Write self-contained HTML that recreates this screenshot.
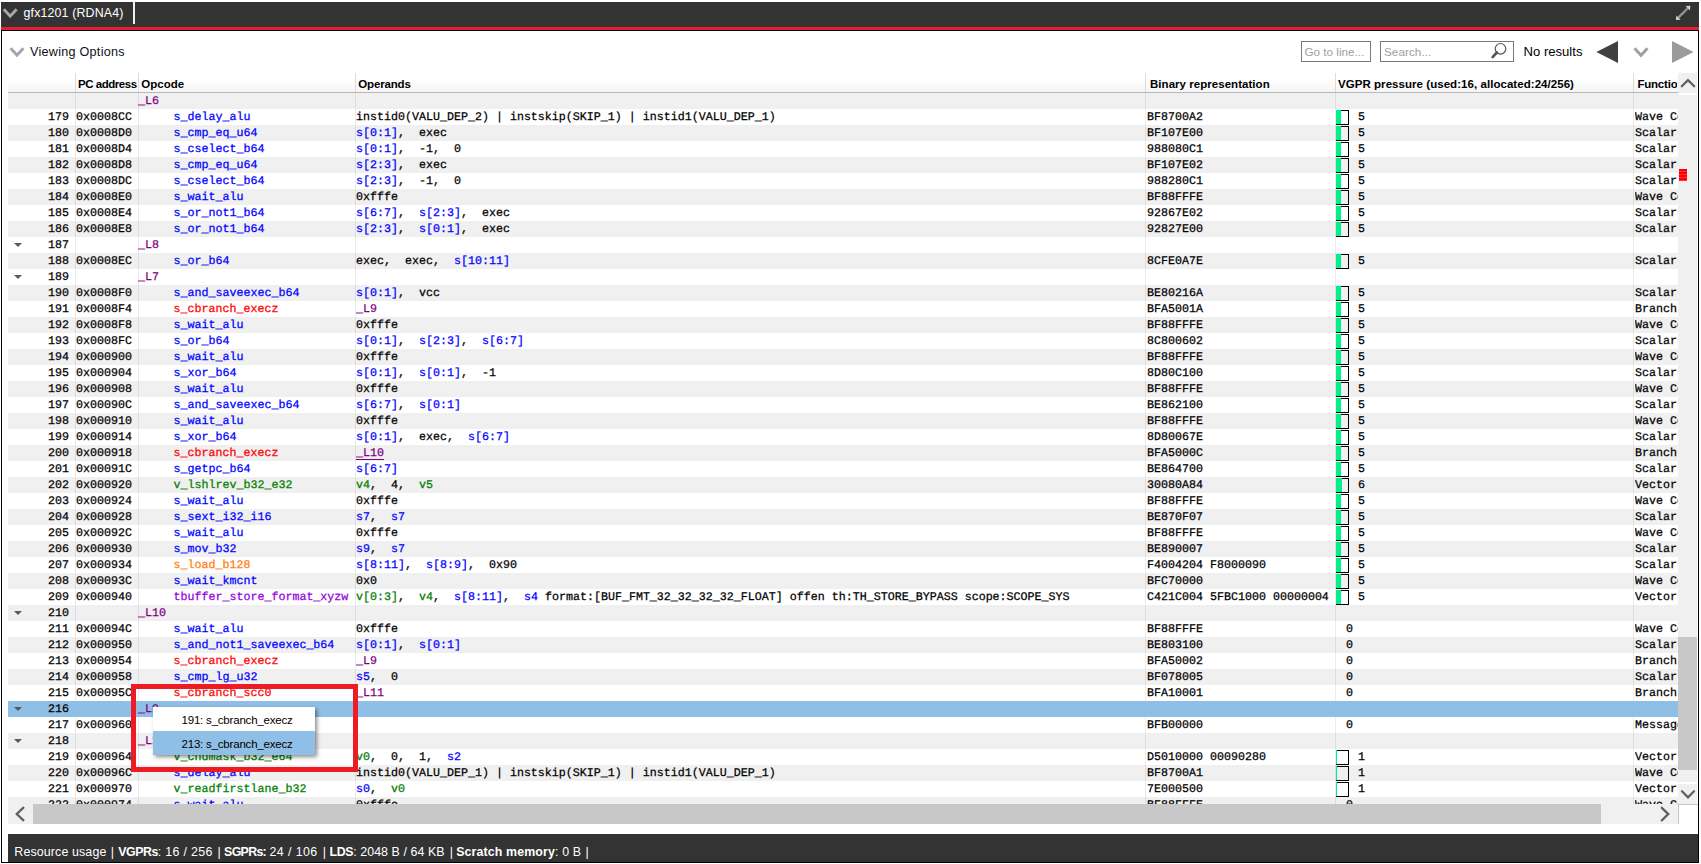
<!DOCTYPE html>
<html><head><meta charset="utf-8"><title>gfx1201</title>
<style>
html,body{margin:0;padding:0;}
body{width:1701px;height:864px;position:relative;overflow:hidden;background:#fff;font-family:"Liberation Sans",sans-serif;}
div,span,i,b,svg{position:absolute;}
#frame{left:1px;top:30px;width:1698px;height:833px;border:1px solid #000;box-sizing:border-box;}
#topbar{left:1px;top:2px;width:1698px;height:25px;background:#333333;}
#redline{left:1px;top:27px;width:1698px;height:3px;background:#e51e36;}
#tabtxt{left:23.5px;top:5px;font-size:12.4px;letter-spacing:0.15px;line-height:16px;color:#fff;white-space:pre;}
#tabsep{left:133px;top:2px;width:2px;height:22px;background:#f0f0f0;}
#vo{left:30px;top:44px;font-size:12.6px;letter-spacing:0.27px;line-height:16px;color:#101020;white-space:pre;}
#hdr{left:8px;top:73px;width:1670px;height:19px;background:linear-gradient(#ffffff,#ffffff 30%,#f5f5f5);}
#hdrline{left:8px;top:92px;width:1670px;height:1px;background:#b9b9b9;}
.h{top:77px;font-size:11.5px;line-height:14px;font-weight:bold;color:#000;white-space:pre;}
.hs{top:73px;width:1px;height:19px;background:#dcdcdc;}
#tb{z-index:0;left:8px;top:93px;width:1670px;height:711px;overflow:hidden;font-family:"Liberation Mono",monospace;font-size:11.67px;letter-spacing:0px;text-rendering:geometricPrecision;color:#000;-webkit-text-stroke:0.25px;}
.r{left:0;width:1670px;height:16px;}
.c{top:0px;height:16px;line-height:16px;white-space:pre;overflow:hidden;-webkit-text-stroke-color:currentColor;}
.c span{position:static;}
.vl{top:0;width:1px;height:711px;background:rgba(0,0,0,0.08);}
.ar{left:6px;top:6px;width:0;height:0;border-left:4px solid transparent;border-right:4px solid transparent;border-top:4.5px solid #5a5a5a;}
.bx{left:1328px;top:1px;width:13px;height:15px;box-sizing:border-box;border:1px solid #000;border-left:none;}
.bx b{left:0;top:-1px;height:14px;background:#00f08c;display:block;}
#status{left:8px;top:834px;width:1690px;height:28px;background:#333333;}
.st{top:844px;font-size:12.6px;line-height:16px;color:#fff;white-space:pre;}
.inp{top:41px;height:21px;box-sizing:border-box;border:1px solid #7a7a7a;background:#fff;}
.ph{top:44px;font-size:11.7px;line-height:16px;color:#a0a0a0;white-space:pre;}
#nores{left:1523.5px;top:44px;font-size:13.1px;line-height:16px;color:#000;white-space:pre;}
#vsb{left:1678px;top:73px;width:19px;height:731px;background:#f0f0f0;}
#vth{left:1678px;top:637px;width:19px;height:133px;background:#c8c8c8;}
#hsb{left:8px;top:804px;width:1670px;height:20px;background:#f0f0f0;}
#hth{left:33px;top:804px;width:1568px;height:20px;background:#c8c8c8;}
#redmark{left:1679px;top:169px;width:8px;height:12px;background:repeating-linear-gradient(#ff0000 0,#ff0000 2px,#ff3030 2px,#ff3030 3px);}
#redbox{left:131px;top:684px;width:227px;height:88px;box-sizing:border-box;border:5px solid #ec1c24;}
#menu{left:153px;top:707px;width:162px;height:48px;background:#fff;box-shadow:2px 2px 4px rgba(0,0,0,0.45);}
#mi2{left:0;top:24px;width:162px;height:24px;background:#8fbfe6;}
.mt{left:28.5px;font-size:11.5px;letter-spacing:-0.2px;line-height:16px;color:#000;white-space:pre;}
</style></head><body>
<div id="topbar"></div><div id="redline"></div><div id="frame"></div>
<svg style="left:0;top:0" width="140" height="70"><path d="M3.8 9.3 L10.2 16.2 L16.6 9.3" fill="none" stroke="#a8a8a8" stroke-width="2.9"/><path d="M10.6 48.2 L17 55.2 L23.4 48.2" fill="none" stroke="#a3a3a8" stroke-width="2.9"/></svg>
<div id="tabtxt">gfx1201 (RDNA4)</div><div id="tabsep"></div>
<svg style="left:1672px;top:2px" width="24" height="24"><g fill="#d0d0d0" stroke="none"><path d="M18.3 3.7 L13.6 4.1 L17.9 8.4 Z"/><path d="M3.9 18.1 L8.6 17.7 L4.3 13.4 Z"/></g><path d="M6.6 15.4 L15.6 6.4" stroke="#d0d0d0" stroke-width="2.3" stroke-dasharray="0.85 0.5" fill="none"/></svg>
<div id="vo">Viewing Options</div>
<div class="inp" style="left:1301px;width:70px"></div><div class="ph" style="left:1304.5px">Go to line...</div>
<div class="inp" style="left:1380px;width:134px"></div><div class="ph" style="left:1384px;font-size:11.8px">Search...</div>
<svg style="left:1488px;top:41px" width="24" height="21"><circle cx="12.5" cy="7.8" r="5.3" fill="none" stroke="#555" stroke-width="1.2"/><path d="M8.9 11.5 L4.6 16.1" stroke="#555" stroke-width="2.6" stroke-linecap="round"/></svg>
<div id="nores">No results</div>
<svg style="left:1590px;top:38px" width="108" height="28"><path d="M6.4 14 L28 3 L28 25 Z" fill="#404040"/><path d="M44.5 10.3 L51 17.3 L57.5 10.3" fill="none" stroke="#a0a0a0" stroke-width="2.9"/><path d="M103.6 14 L82 3 L82 25 Z" fill="#9b9b9b"/></svg>
<div id="hdr"></div><div id="hdrline"></div>
<div class="hs" style="left:75px"></div><div class="hs" style="left:138px"></div><div class="hs" style="left:355px"></div><div class="hs" style="left:1145px"></div><div class="hs" style="left:1335px"></div><div class="hs" style="left:1633px"></div>
<div class="h" style="left:78px;letter-spacing:-0.46px">PC address</div>
<div class="h" style="left:141.3px">Opcode</div>
<div class="h" style="left:358.3px;letter-spacing:-0.16px">Operands</div>
<div class="h" style="left:1150px;letter-spacing:0.04px">Binary representation</div>
<div class="h" style="left:1338px;letter-spacing:0.05px">VGPR pressure (used:16, allocated:24/256)</div>
<div class="h" style="left:1637.4px;letter-spacing:-0.2px;width:40px;overflow:hidden">Functio</div>
<div id="tb">
<div class="r" style="top:0px;background:#f0f0f0"><div class="c" style="left:130px;width:215px;"><span style="color:#800080">_L6</span></div></div>
<div class="r" style="top:16px;background:#ffffff"><div class="c" style="left:0px;width:61px;text-align:right">179</div><div class="c" style="left:68px;width:62px;">0x0008CC</div><div class="c" style="left:130.5px;width:215px;"><span style="color:#0000ff">     s_delay_alu</span></div><div class="c" style="left:348px;width:790px;">instid0(VALU_DEP_2) | instskip(SKIP_1) | instid1(VALU_DEP_1)</div><div class="c" style="left:1139px;width:189px;">BF8700A2</div><i class="bx"><b style="width:5px"></b></i><div class="c" style="left:1350px;width:100px;">5</div><div class="c" style="left:1627px;width:43px;">Wave Control</div></div>
<div class="r" style="top:32px;background:#f0f0f0"><div class="c" style="left:0px;width:61px;text-align:right">180</div><div class="c" style="left:68px;width:62px;">0x0008D0</div><div class="c" style="left:130.5px;width:215px;"><span style="color:#0000ff">     s_cmp_eq_u64</span></div><div class="c" style="left:348px;width:790px;"><span style="color:#0000ff">s[0:1]</span>,  exec</div><div class="c" style="left:1139px;width:189px;">BF107E00</div><i class="bx"><b style="width:5px"></b></i><div class="c" style="left:1350px;width:100px;">5</div><div class="c" style="left:1627px;width:43px;">Scalar ALU</div></div>
<div class="r" style="top:48px;background:#ffffff"><div class="c" style="left:0px;width:61px;text-align:right">181</div><div class="c" style="left:68px;width:62px;">0x0008D4</div><div class="c" style="left:130.5px;width:215px;"><span style="color:#0000ff">     s_cselect_b64</span></div><div class="c" style="left:348px;width:790px;"><span style="color:#0000ff">s[0:1]</span>,  -1,  0</div><div class="c" style="left:1139px;width:189px;">988080C1</div><i class="bx"><b style="width:5px"></b></i><div class="c" style="left:1350px;width:100px;">5</div><div class="c" style="left:1627px;width:43px;">Scalar ALU</div></div>
<div class="r" style="top:64px;background:#f0f0f0"><div class="c" style="left:0px;width:61px;text-align:right">182</div><div class="c" style="left:68px;width:62px;">0x0008D8</div><div class="c" style="left:130.5px;width:215px;"><span style="color:#0000ff">     s_cmp_eq_u64</span></div><div class="c" style="left:348px;width:790px;"><span style="color:#0000ff">s[2:3]</span>,  exec</div><div class="c" style="left:1139px;width:189px;">BF107E02</div><i class="bx"><b style="width:5px"></b></i><div class="c" style="left:1350px;width:100px;">5</div><div class="c" style="left:1627px;width:43px;">Scalar ALU</div></div>
<div class="r" style="top:80px;background:#ffffff"><div class="c" style="left:0px;width:61px;text-align:right">183</div><div class="c" style="left:68px;width:62px;">0x0008DC</div><div class="c" style="left:130.5px;width:215px;"><span style="color:#0000ff">     s_cselect_b64</span></div><div class="c" style="left:348px;width:790px;"><span style="color:#0000ff">s[2:3]</span>,  -1,  0</div><div class="c" style="left:1139px;width:189px;">988280C1</div><i class="bx"><b style="width:5px"></b></i><div class="c" style="left:1350px;width:100px;">5</div><div class="c" style="left:1627px;width:43px;">Scalar ALU</div></div>
<div class="r" style="top:96px;background:#f0f0f0"><div class="c" style="left:0px;width:61px;text-align:right">184</div><div class="c" style="left:68px;width:62px;">0x0008E0</div><div class="c" style="left:130.5px;width:215px;"><span style="color:#0000ff">     s_wait_alu</span></div><div class="c" style="left:348px;width:790px;">0xfffe</div><div class="c" style="left:1139px;width:189px;">BF88FFFE</div><i class="bx"><b style="width:5px"></b></i><div class="c" style="left:1350px;width:100px;">5</div><div class="c" style="left:1627px;width:43px;">Wave Control</div></div>
<div class="r" style="top:112px;background:#ffffff"><div class="c" style="left:0px;width:61px;text-align:right">185</div><div class="c" style="left:68px;width:62px;">0x0008E4</div><div class="c" style="left:130.5px;width:215px;"><span style="color:#0000ff">     s_or_not1_b64</span></div><div class="c" style="left:348px;width:790px;"><span style="color:#0000ff">s[6:7]</span>,  <span style="color:#0000ff">s[2:3]</span>,  exec</div><div class="c" style="left:1139px;width:189px;">92867E02</div><i class="bx"><b style="width:5px"></b></i><div class="c" style="left:1350px;width:100px;">5</div><div class="c" style="left:1627px;width:43px;">Scalar ALU</div></div>
<div class="r" style="top:128px;background:#f0f0f0"><div class="c" style="left:0px;width:61px;text-align:right">186</div><div class="c" style="left:68px;width:62px;">0x0008E8</div><div class="c" style="left:130.5px;width:215px;"><span style="color:#0000ff">     s_or_not1_b64</span></div><div class="c" style="left:348px;width:790px;"><span style="color:#0000ff">s[2:3]</span>,  <span style="color:#0000ff">s[0:1]</span>,  exec</div><div class="c" style="left:1139px;width:189px;">92827E00</div><i class="bx"><b style="width:5px"></b></i><div class="c" style="left:1350px;width:100px;">5</div><div class="c" style="left:1627px;width:43px;">Scalar ALU</div></div>
<div class="r" style="top:144px;background:#ffffff"><i class="ar"></i><div class="c" style="left:0px;width:61px;text-align:right">187</div><div class="c" style="left:130px;width:215px;"><span style="color:#800080">_L8</span></div></div>
<div class="r" style="top:160px;background:#f0f0f0"><div class="c" style="left:0px;width:61px;text-align:right">188</div><div class="c" style="left:68px;width:62px;">0x0008EC</div><div class="c" style="left:130.5px;width:215px;"><span style="color:#0000ff">     s_or_b64</span></div><div class="c" style="left:348px;width:790px;">exec,  exec,  <span style="color:#0000ff">s[10:11]</span></div><div class="c" style="left:1139px;width:189px;">8CFE0A7E</div><i class="bx"><b style="width:5px"></b></i><div class="c" style="left:1350px;width:100px;">5</div><div class="c" style="left:1627px;width:43px;">Scalar ALU</div></div>
<div class="r" style="top:176px;background:#ffffff"><i class="ar"></i><div class="c" style="left:0px;width:61px;text-align:right">189</div><div class="c" style="left:130px;width:215px;"><span style="color:#800080">_L7</span></div></div>
<div class="r" style="top:192px;background:#f0f0f0"><div class="c" style="left:0px;width:61px;text-align:right">190</div><div class="c" style="left:68px;width:62px;">0x0008F0</div><div class="c" style="left:130.5px;width:215px;"><span style="color:#0000ff">     s_and_saveexec_b64</span></div><div class="c" style="left:348px;width:790px;"><span style="color:#0000ff">s[0:1]</span>,  vcc</div><div class="c" style="left:1139px;width:189px;">BE80216A</div><i class="bx"><b style="width:5px"></b></i><div class="c" style="left:1350px;width:100px;">5</div><div class="c" style="left:1627px;width:43px;">Scalar ALU</div></div>
<div class="r" style="top:208px;background:#ffffff"><div class="c" style="left:0px;width:61px;text-align:right">191</div><div class="c" style="left:68px;width:62px;">0x0008F4</div><div class="c" style="left:130.5px;width:215px;"><span style="color:#ff0000">     s_cbranch_execz</span></div><div class="c" style="left:348px;width:790px;"><span style="color:#800080">_L9</span></div><div class="c" style="left:1139px;width:189px;">BFA5001A</div><i class="bx"><b style="width:5px"></b></i><div class="c" style="left:1350px;width:100px;">5</div><div class="c" style="left:1627px;width:43px;">Branch</div></div>
<div class="r" style="top:224px;background:#f0f0f0"><div class="c" style="left:0px;width:61px;text-align:right">192</div><div class="c" style="left:68px;width:62px;">0x0008F8</div><div class="c" style="left:130.5px;width:215px;"><span style="color:#0000ff">     s_wait_alu</span></div><div class="c" style="left:348px;width:790px;">0xfffe</div><div class="c" style="left:1139px;width:189px;">BF88FFFE</div><i class="bx"><b style="width:5px"></b></i><div class="c" style="left:1350px;width:100px;">5</div><div class="c" style="left:1627px;width:43px;">Wave Control</div></div>
<div class="r" style="top:240px;background:#ffffff"><div class="c" style="left:0px;width:61px;text-align:right">193</div><div class="c" style="left:68px;width:62px;">0x0008FC</div><div class="c" style="left:130.5px;width:215px;"><span style="color:#0000ff">     s_or_b64</span></div><div class="c" style="left:348px;width:790px;"><span style="color:#0000ff">s[0:1]</span>,  <span style="color:#0000ff">s[2:3]</span>,  <span style="color:#0000ff">s[6:7]</span></div><div class="c" style="left:1139px;width:189px;">8C800602</div><i class="bx"><b style="width:5px"></b></i><div class="c" style="left:1350px;width:100px;">5</div><div class="c" style="left:1627px;width:43px;">Scalar ALU</div></div>
<div class="r" style="top:256px;background:#f0f0f0"><div class="c" style="left:0px;width:61px;text-align:right">194</div><div class="c" style="left:68px;width:62px;">0x000900</div><div class="c" style="left:130.5px;width:215px;"><span style="color:#0000ff">     s_wait_alu</span></div><div class="c" style="left:348px;width:790px;">0xfffe</div><div class="c" style="left:1139px;width:189px;">BF88FFFE</div><i class="bx"><b style="width:5px"></b></i><div class="c" style="left:1350px;width:100px;">5</div><div class="c" style="left:1627px;width:43px;">Wave Control</div></div>
<div class="r" style="top:272px;background:#ffffff"><div class="c" style="left:0px;width:61px;text-align:right">195</div><div class="c" style="left:68px;width:62px;">0x000904</div><div class="c" style="left:130.5px;width:215px;"><span style="color:#0000ff">     s_xor_b64</span></div><div class="c" style="left:348px;width:790px;"><span style="color:#0000ff">s[0:1]</span>,  <span style="color:#0000ff">s[0:1]</span>,  -1</div><div class="c" style="left:1139px;width:189px;">8D80C100</div><i class="bx"><b style="width:5px"></b></i><div class="c" style="left:1350px;width:100px;">5</div><div class="c" style="left:1627px;width:43px;">Scalar ALU</div></div>
<div class="r" style="top:288px;background:#f0f0f0"><div class="c" style="left:0px;width:61px;text-align:right">196</div><div class="c" style="left:68px;width:62px;">0x000908</div><div class="c" style="left:130.5px;width:215px;"><span style="color:#0000ff">     s_wait_alu</span></div><div class="c" style="left:348px;width:790px;">0xfffe</div><div class="c" style="left:1139px;width:189px;">BF88FFFE</div><i class="bx"><b style="width:5px"></b></i><div class="c" style="left:1350px;width:100px;">5</div><div class="c" style="left:1627px;width:43px;">Wave Control</div></div>
<div class="r" style="top:304px;background:#ffffff"><div class="c" style="left:0px;width:61px;text-align:right">197</div><div class="c" style="left:68px;width:62px;">0x00090C</div><div class="c" style="left:130.5px;width:215px;"><span style="color:#0000ff">     s_and_saveexec_b64</span></div><div class="c" style="left:348px;width:790px;"><span style="color:#0000ff">s[6:7]</span>,  <span style="color:#0000ff">s[0:1]</span></div><div class="c" style="left:1139px;width:189px;">BE862100</div><i class="bx"><b style="width:5px"></b></i><div class="c" style="left:1350px;width:100px;">5</div><div class="c" style="left:1627px;width:43px;">Scalar ALU</div></div>
<div class="r" style="top:320px;background:#f0f0f0"><div class="c" style="left:0px;width:61px;text-align:right">198</div><div class="c" style="left:68px;width:62px;">0x000910</div><div class="c" style="left:130.5px;width:215px;"><span style="color:#0000ff">     s_wait_alu</span></div><div class="c" style="left:348px;width:790px;">0xfffe</div><div class="c" style="left:1139px;width:189px;">BF88FFFE</div><i class="bx"><b style="width:5px"></b></i><div class="c" style="left:1350px;width:100px;">5</div><div class="c" style="left:1627px;width:43px;">Wave Control</div></div>
<div class="r" style="top:336px;background:#ffffff"><div class="c" style="left:0px;width:61px;text-align:right">199</div><div class="c" style="left:68px;width:62px;">0x000914</div><div class="c" style="left:130.5px;width:215px;"><span style="color:#0000ff">     s_xor_b64</span></div><div class="c" style="left:348px;width:790px;"><span style="color:#0000ff">s[0:1]</span>,  exec,  <span style="color:#0000ff">s[6:7]</span></div><div class="c" style="left:1139px;width:189px;">8D80067E</div><i class="bx"><b style="width:5px"></b></i><div class="c" style="left:1350px;width:100px;">5</div><div class="c" style="left:1627px;width:43px;">Scalar ALU</div></div>
<div class="r" style="top:352px;background:#f0f0f0"><div class="c" style="left:0px;width:61px;text-align:right">200</div><div class="c" style="left:68px;width:62px;">0x000918</div><div class="c" style="left:130.5px;width:215px;"><span style="color:#ff0000">     s_cbranch_execz</span></div><div class="c" style="left:348px;width:790px;"><span style="color:#800080;text-decoration:underline;text-underline-offset:2.5px;text-decoration-thickness:1px">_L10</span></div><div class="c" style="left:1139px;width:189px;">BFA5000C</div><i class="bx"><b style="width:5px"></b></i><div class="c" style="left:1350px;width:100px;">5</div><div class="c" style="left:1627px;width:43px;">Branch</div></div>
<div class="r" style="top:368px;background:#ffffff"><div class="c" style="left:0px;width:61px;text-align:right">201</div><div class="c" style="left:68px;width:62px;">0x00091C</div><div class="c" style="left:130.5px;width:215px;"><span style="color:#0000ff">     s_getpc_b64</span></div><div class="c" style="left:348px;width:790px;"><span style="color:#0000ff">s[6:7]</span></div><div class="c" style="left:1139px;width:189px;">BE864700</div><i class="bx"><b style="width:5px"></b></i><div class="c" style="left:1350px;width:100px;">5</div><div class="c" style="left:1627px;width:43px;">Scalar ALU</div></div>
<div class="r" style="top:384px;background:#f0f0f0"><div class="c" style="left:0px;width:61px;text-align:right">202</div><div class="c" style="left:68px;width:62px;">0x000920</div><div class="c" style="left:130.5px;width:215px;"><span style="color:#008000">     v_lshlrev_b32_e32</span></div><div class="c" style="left:348px;width:790px;"><span style="color:#008000">v4</span>,  4,  <span style="color:#008000">v5</span></div><div class="c" style="left:1139px;width:189px;">30080A84</div><i class="bx"><b style="width:6px"></b></i><div class="c" style="left:1350px;width:100px;">6</div><div class="c" style="left:1627px;width:43px;">Vector ALU</div></div>
<div class="r" style="top:400px;background:#ffffff"><div class="c" style="left:0px;width:61px;text-align:right">203</div><div class="c" style="left:68px;width:62px;">0x000924</div><div class="c" style="left:130.5px;width:215px;"><span style="color:#0000ff">     s_wait_alu</span></div><div class="c" style="left:348px;width:790px;">0xfffe</div><div class="c" style="left:1139px;width:189px;">BF88FFFE</div><i class="bx"><b style="width:5px"></b></i><div class="c" style="left:1350px;width:100px;">5</div><div class="c" style="left:1627px;width:43px;">Wave Control</div></div>
<div class="r" style="top:416px;background:#f0f0f0"><div class="c" style="left:0px;width:61px;text-align:right">204</div><div class="c" style="left:68px;width:62px;">0x000928</div><div class="c" style="left:130.5px;width:215px;"><span style="color:#0000ff">     s_sext_i32_i16</span></div><div class="c" style="left:348px;width:790px;"><span style="color:#0000ff">s7</span>,  <span style="color:#0000ff">s7</span></div><div class="c" style="left:1139px;width:189px;">BE870F07</div><i class="bx"><b style="width:5px"></b></i><div class="c" style="left:1350px;width:100px;">5</div><div class="c" style="left:1627px;width:43px;">Scalar ALU</div></div>
<div class="r" style="top:432px;background:#ffffff"><div class="c" style="left:0px;width:61px;text-align:right">205</div><div class="c" style="left:68px;width:62px;">0x00092C</div><div class="c" style="left:130.5px;width:215px;"><span style="color:#0000ff">     s_wait_alu</span></div><div class="c" style="left:348px;width:790px;">0xfffe</div><div class="c" style="left:1139px;width:189px;">BF88FFFE</div><i class="bx"><b style="width:5px"></b></i><div class="c" style="left:1350px;width:100px;">5</div><div class="c" style="left:1627px;width:43px;">Wave Control</div></div>
<div class="r" style="top:448px;background:#f0f0f0"><div class="c" style="left:0px;width:61px;text-align:right">206</div><div class="c" style="left:68px;width:62px;">0x000930</div><div class="c" style="left:130.5px;width:215px;"><span style="color:#0000ff">     s_mov_b32</span></div><div class="c" style="left:348px;width:790px;"><span style="color:#0000ff">s9</span>,  <span style="color:#0000ff">s7</span></div><div class="c" style="left:1139px;width:189px;">BE890007</div><i class="bx"><b style="width:5px"></b></i><div class="c" style="left:1350px;width:100px;">5</div><div class="c" style="left:1627px;width:43px;">Scalar ALU</div></div>
<div class="r" style="top:464px;background:#ffffff"><div class="c" style="left:0px;width:61px;text-align:right">207</div><div class="c" style="left:68px;width:62px;">0x000934</div><div class="c" style="left:130.5px;width:215px;"><span style="color:#ff7f0e">     s_load_b128</span></div><div class="c" style="left:348px;width:790px;"><span style="color:#0000ff">s[8:11]</span>,  <span style="color:#0000ff">s[8:9]</span>,  0x90</div><div class="c" style="left:1139px;width:189px;">F4004204 F8000090</div><i class="bx"><b style="width:5px"></b></i><div class="c" style="left:1350px;width:100px;">5</div><div class="c" style="left:1627px;width:43px;">Scalar ALU</div></div>
<div class="r" style="top:480px;background:#f0f0f0"><div class="c" style="left:0px;width:61px;text-align:right">208</div><div class="c" style="left:68px;width:62px;">0x00093C</div><div class="c" style="left:130.5px;width:215px;"><span style="color:#0000ff">     s_wait_kmcnt</span></div><div class="c" style="left:348px;width:790px;">0x0</div><div class="c" style="left:1139px;width:189px;">BFC70000</div><i class="bx"><b style="width:5px"></b></i><div class="c" style="left:1350px;width:100px;">5</div><div class="c" style="left:1627px;width:43px;">Wave Control</div></div>
<div class="r" style="top:496px;background:#ffffff"><div class="c" style="left:0px;width:61px;text-align:right">209</div><div class="c" style="left:68px;width:62px;">0x000940</div><div class="c" style="left:130.5px;width:215px;"><span style="color:#9400e0">     tbuffer_store_format_xyzw</span></div><div class="c" style="left:348px;width:790px;"><span style="color:#008000">v[0:3]</span>,  <span style="color:#008000">v4</span>,  <span style="color:#0000ff">s[8:11]</span>,  <span style="color:#0000ff">s4</span> format:[BUF_FMT_32_32_32_32_FLOAT] offen th:TH_STORE_BYPASS scope:SCOPE_SYS</div><div class="c" style="left:1139px;width:189px;">C421C004 5FBC1000 00000004</div><i class="bx"><b style="width:5px"></b></i><div class="c" style="left:1350px;width:100px;">5</div><div class="c" style="left:1627px;width:43px;">Vector ALU</div></div>
<div class="r" style="top:512px;background:#f0f0f0"><i class="ar"></i><div class="c" style="left:0px;width:61px;text-align:right">210</div><div class="c" style="left:130px;width:215px;"><span style="color:#800080">_L10</span></div></div>
<div class="r" style="top:528px;background:#ffffff"><div class="c" style="left:0px;width:61px;text-align:right">211</div><div class="c" style="left:68px;width:62px;">0x00094C</div><div class="c" style="left:130.5px;width:215px;"><span style="color:#0000ff">     s_wait_alu</span></div><div class="c" style="left:348px;width:790px;">0xfffe</div><div class="c" style="left:1139px;width:189px;">BF88FFFE</div><div class="c" style="left:1338px;width:100px;">0</div><div class="c" style="left:1627px;width:43px;">Wave Control</div></div>
<div class="r" style="top:544px;background:#f0f0f0"><div class="c" style="left:0px;width:61px;text-align:right">212</div><div class="c" style="left:68px;width:62px;">0x000950</div><div class="c" style="left:130.5px;width:215px;"><span style="color:#0000ff">     s_and_not1_saveexec_b64</span></div><div class="c" style="left:348px;width:790px;"><span style="color:#0000ff">s[0:1]</span>,  <span style="color:#0000ff">s[0:1]</span></div><div class="c" style="left:1139px;width:189px;">BE803100</div><div class="c" style="left:1338px;width:100px;">0</div><div class="c" style="left:1627px;width:43px;">Scalar ALU</div></div>
<div class="r" style="top:560px;background:#ffffff"><div class="c" style="left:0px;width:61px;text-align:right">213</div><div class="c" style="left:68px;width:62px;">0x000954</div><div class="c" style="left:130.5px;width:215px;"><span style="color:#ff0000">     s_cbranch_execz</span></div><div class="c" style="left:348px;width:790px;"><span style="color:#800080">_L9</span></div><div class="c" style="left:1139px;width:189px;">BFA50002</div><div class="c" style="left:1338px;width:100px;">0</div><div class="c" style="left:1627px;width:43px;">Branch</div></div>
<div class="r" style="top:576px;background:#f0f0f0"><div class="c" style="left:0px;width:61px;text-align:right">214</div><div class="c" style="left:68px;width:62px;">0x000958</div><div class="c" style="left:130.5px;width:215px;"><span style="color:#0000ff">     s_cmp_lg_u32</span></div><div class="c" style="left:348px;width:790px;"><span style="color:#0000ff">s5</span>,  0</div><div class="c" style="left:1139px;width:189px;">BF078005</div><div class="c" style="left:1338px;width:100px;">0</div><div class="c" style="left:1627px;width:43px;">Scalar ALU</div></div>
<div class="r" style="top:592px;background:#ffffff"><div class="c" style="left:0px;width:61px;text-align:right">215</div><div class="c" style="left:68px;width:62px;">0x00095C</div><div class="c" style="left:130.5px;width:215px;"><span style="color:#ff0000">     s_cbranch_scc0</span></div><div class="c" style="left:348px;width:790px;"><span style="color:#800080">_L11</span></div><div class="c" style="left:1139px;width:189px;">BFA10001</div><div class="c" style="left:1338px;width:100px;">0</div><div class="c" style="left:1627px;width:43px;">Branch</div></div>
<div class="r" style="top:608px;background:#8fbfe6;z-index:2"><i class="ar"></i><div class="c" style="left:0px;width:61px;text-align:right">216</div><div class="c" style="left:130px;width:215px;"><span style="color:#800080">_L9</span></div></div>
<div class="r" style="top:624px;background:#ffffff"><div class="c" style="left:0px;width:61px;text-align:right">217</div><div class="c" style="left:68px;width:62px;">0x000960</div><div class="c" style="left:130.5px;width:215px;"><span style="color:#0000ff">     s_endpgm</span></div><div class="c" style="left:348px;width:790px;"></div><div class="c" style="left:1139px;width:189px;">BFB00000</div><div class="c" style="left:1338px;width:100px;">0</div><div class="c" style="left:1627px;width:43px;">Message</div></div>
<div class="r" style="top:640px;background:#f0f0f0"><i class="ar"></i><div class="c" style="left:0px;width:61px;text-align:right">218</div><div class="c" style="left:130px;width:215px;"><span style="color:#800080">_L11</span></div></div>
<div class="r" style="top:656px;background:#ffffff"><div class="c" style="left:0px;width:61px;text-align:right">219</div><div class="c" style="left:68px;width:62px;">0x000964</div><div class="c" style="left:130.5px;width:215px;"><span style="color:#008000">     v_cndmask_b32_e64</span></div><div class="c" style="left:348px;width:790px;"><span style="color:#008000">v0</span>,  0,  1,  <span style="color:#0000ff">s2</span></div><div class="c" style="left:1139px;width:189px;">D5010000 00090280</div><i class="bx"><b style="width:1px"></b></i><div class="c" style="left:1350px;width:100px;">1</div><div class="c" style="left:1627px;width:43px;">Vector ALU</div></div>
<div class="r" style="top:672px;background:#f0f0f0"><div class="c" style="left:0px;width:61px;text-align:right">220</div><div class="c" style="left:68px;width:62px;">0x00096C</div><div class="c" style="left:130.5px;width:215px;"><span style="color:#0000ff">     s_delay_alu</span></div><div class="c" style="left:348px;width:790px;">instid0(VALU_DEP_1) | instskip(SKIP_1) | instid1(VALU_DEP_1)</div><div class="c" style="left:1139px;width:189px;">BF8700A1</div><i class="bx"><b style="width:1px"></b></i><div class="c" style="left:1350px;width:100px;">1</div><div class="c" style="left:1627px;width:43px;">Wave Control</div></div>
<div class="r" style="top:688px;background:#ffffff"><div class="c" style="left:0px;width:61px;text-align:right">221</div><div class="c" style="left:68px;width:62px;">0x000970</div><div class="c" style="left:130.5px;width:215px;"><span style="color:#008000">     v_readfirstlane_b32</span></div><div class="c" style="left:348px;width:790px;"><span style="color:#0000ff">s0</span>,  <span style="color:#008000">v0</span></div><div class="c" style="left:1139px;width:189px;">7E000500</div><i class="bx"><b style="width:1px"></b></i><div class="c" style="left:1350px;width:100px;">1</div><div class="c" style="left:1627px;width:43px;">Vector ALU</div></div>
<div class="r" style="top:704px;background:#f0f0f0"><div class="c" style="left:0px;width:61px;text-align:right">222</div><div class="c" style="left:68px;width:62px;">0x000974</div><div class="c" style="left:130.5px;width:215px;"><span style="color:#0000ff">     s_wait_alu</span></div><div class="c" style="left:348px;width:790px;">0xfffe</div><div class="c" style="left:1139px;width:189px;">BF88FFFE</div><div class="c" style="left:1338px;width:100px;">0</div><div class="c" style="left:1627px;width:43px;">Wave Control</div></div>
<div class="vl" style="left:67px"></div><div class="vl" style="left:130px"></div><div class="vl" style="left:347px"></div><div class="vl" style="left:1137px"></div><div class="vl" style="left:1327px"></div><div class="vl" style="left:1625px"></div>
</div>
<div id="vsb"></div><div id="vth"></div><div id="redmark"></div>
<div id="hsb"></div><div id="hth"></div>
<div style="left:1678px;top:93px;width:19px;height:2px;background:#fff"></div><div style="left:1678px;top:782px;width:19px;height:2px;background:#fff"></div>
<svg style="left:1678px;top:73px" width="20" height="20"><path d="M3.8 13.3 L10 7.1 L16.2 13.3" fill="none" stroke="#606060" stroke-width="2.3" stroke-linecap="round"/></svg>
<svg style="left:1678px;top:784px" width="20" height="20"><path d="M4 7.2 L10 13.3 L16 7.2" fill="none" stroke="#606060" stroke-width="2.3" stroke-linecap="round"/></svg>
<svg style="left:8px;top:804px" width="26" height="20"><path d="M15.4 3.7 L8.8 10 L15.4 16.3" fill="none" stroke="#606060" stroke-width="2.3" stroke-linecap="round"/></svg>
<svg style="left:1652px;top:804px" width="26" height="20"><path d="M9.8 3.8 L16.3 10.1 L9.8 16.4" fill="none" stroke="#606060" stroke-width="2.3" stroke-linecap="round"/></svg>
<div style="left:1678px;top:804px;width:20px;height:20px;background:#fff;border-left:1px solid #c4c4c4;border-top:1px solid #c4c4c4;box-sizing:border-box"></div>
<div id="redbox"></div>
<div id="menu"><div class="mt" style="top:5px">191: s_cbranch_execz</div><div id="mi2"></div><div class="mt" style="top:29px">213: s_cbranch_execz</div></div>
<div id="status"></div>
<span class="st" style="left:14.3px;font-size:12.4px;letter-spacing:0.136px;">Resource usage</span><span class="st" style="left:110.8px;font-size:12.4px;letter-spacing:-1.221px;">|</span><span class="st" style="left:118.3px;font-size:12.4px;letter-spacing:-0.508px;font-weight:bold;">VGPRs</span><span class="st" style="left:157.8px;font-size:12.4px;letter-spacing:0.329px;">: 16 / 256</span><span class="st" style="left:217.5px;font-size:12.4px;letter-spacing:-1.221px;">|</span><span class="st" style="left:224.1px;font-size:12.4px;letter-spacing:-0.695px;font-weight:bold;">SGPRs:</span><span class="st" style="left:269.5px;font-size:12.4px;letter-spacing:0.423px;">24 / 106</span><span class="st" style="left:322.7px;font-size:12.4px;letter-spacing:-1.221px;">|</span><span class="st" style="left:329.6px;font-size:12.4px;letter-spacing:-0.4px;font-weight:bold;">LDS</span><span class="st" style="left:353.2px;font-size:12.4px;letter-spacing:0.075px;">: 2048 B / 64 KB</span><span class="st" style="left:449.8px;font-size:12.4px;letter-spacing:-1.221px;">|</span><span class="st" style="left:456.2px;font-size:12.4px;letter-spacing:0.123px;font-weight:bold;">Scratch memory</span><span class="st" style="left:555.1px;font-size:12.4px;letter-spacing:0.1px;">: 0 B</span><span class="st" style="left:585.6px;font-size:12.4px;letter-spacing:-1.221px;">|</span>
</body></html>
